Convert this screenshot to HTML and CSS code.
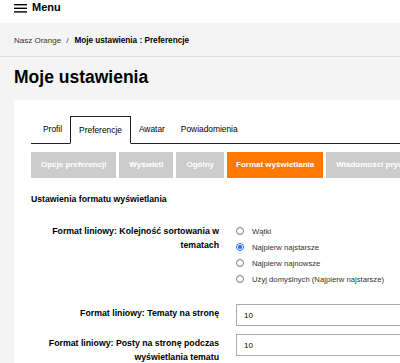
FILE: index.html
```
<!DOCTYPE html>
<html lang="pl">
<head>
<meta charset="utf-8">
<title>Moje ustawienia</title>
<link rel="stylesheet" href="styles.css">
</head>
<body>
<header class="topbar">
  <svg class="menu-icon" width="13" height="10" viewBox="0 0 13 10" aria-hidden="true">
    <rect x="0" y="0" width="13" height="1.4" fill="#000"/>
    <rect x="0" y="3.6" width="13" height="1.4" fill="#000"/>
    <rect x="0" y="7.2" width="13" height="1.4" fill="#000"/>
  </svg>
  <span class="menu-label">Menu</span>
</header>
<nav class="breadcrumb">
  <span class="crumb">Nasz Orange</span>
  <span class="crumb-sep">/</span>
  <span class="crumb-current">Moje ustawienia : Preferencje</span>
</nav>
<main class="page">
  <h1 class="page-title">Moje ustawienia</h1>
  <section class="card">
    <ul class="tabs">
      <li class="tab">Profil</li>
      <li class="tab tab-active">Preferencje</li>
      <li class="tab">Awatar</li>
      <li class="tab">Powiadomienia</li>
    </ul>
    <div class="subtabs">
      <span class="subtab">Opcje preferencji</span>
      <span class="subtab">Wyświetl</span>
      <span class="subtab">Ogólny</span>
      <span class="subtab subtab-active">Format wyświetlania</span>
      <span class="subtab">Wiadomości prywatne</span>
    </div>
    <h2 class="section-title">Ustawienia formatu wyświetlania</h2>
    <div class="form">
      <div class="field field-radio">
        <div class="field-label">Format liniowy: Kolejność sortowania w tematach</div>
        <div class="radios">
          <div class="radio-row"><span class="radio"></span>Wątki</div>
          <div class="radio-row"><span class="radio radio-checked"></span>Najpierw najstarsze</div>
          <div class="radio-row"><span class="radio"></span>Najpierw najnowsze</div>
          <div class="radio-row"><span class="radio"></span>Użyj domyślnych (Najpierw najstarsze)</div>
        </div>
      </div>
      <div class="field">
        <div class="field-label">Format liniowy: Tematy na stronę</div>
        <div><input class="text-input" type="text" value="10"></div>
      </div>
      <div class="field">
        <div class="field-label">Format liniowy: Posty na stronę podczas wyświetlania tematu</div>
        <div><input class="text-input" type="text" value="10"></div>
      </div>
    </div>
  </section>
</main>
</body>
</html>
```
FILE: styles.css
```
html, body {
  margin: 0;
  padding: 0;
  overflow: hidden;
}
body {
  font-family: "Liberation Sans", Arial, sans-serif;
  background: #f4f4f4;
  color: #000;
  width: 400px;
  height: 363px;
}
.topbar {
  height: 23px;
  background: #fff;
  display: flex;
  align-items: flex-start;
  padding-left: 14px;
  box-sizing: border-box;
}
.menu-icon {
  margin-top: 4px;
  margin-right: 5px;
}
.menu-label {
  font-size: 11px;
  font-weight: bold;
  line-height: 13px;
  margin-top: 1px;
}
.breadcrumb {
  height: 34px;
  box-sizing: border-box;
  border-bottom: 1px solid #dcdcdc;
  display: flex;
  align-items: center;
  padding-left: 14px;
  padding-top: 1px;
  font-size: 8px;
  background: #f4f4f4;
}
.crumb {
  color: #333;
}
.crumb-sep {
  color: #333;
  margin: 0 6px 0 5px;
}
.crumb-current {
  font-weight: bold;
  font-size: 8.2px;
}
.page {
  padding: 0 0 0 14px;
}
.page-title {
  font-size: 17.5px;
  line-height: 20px;
  font-weight: bold;
  margin: 10px 0 13px 0;
}
.card {
  background: #fff;
  width: 600px;
  padding: 16px 0 20px 17px;
  box-sizing: border-box;
}
.tabs {
  list-style: none;
  margin: 0;
  padding: 0 0 0 4px;
  display: flex;
  align-items: flex-end;
  border-bottom: 1px solid #222;
}
.tab {
  font-size: 8.4px;
  height: 27px;
  line-height: 27px;
  padding: 0 8px;
}
.tab-active {
  height: 26px;
  line-height: 26px;
  border: 1px solid #222;
  border-bottom: 1px solid #fff;
  margin-bottom: -1px;
  background: #fff;
}
.subtabs {
  display: flex;
  gap: 3px;
  margin-top: 8px;
  white-space: nowrap;
}
.subtab {
  height: 26px;
  line-height: 26px;
  padding: 0 10px;
  background: #cccccc;
  color: #fff;
  font-size: 8px;
  font-weight: bold;
}
.subtab-active {
  background: #ff7900;
  padding: 0 9px;
}
.section-title {
  font-size: 8.7px;
  line-height: 12px;
  font-weight: bold;
  margin: 15px 0 0 0;
}
.form {
  margin-top: 17px;
}
.field {
  display: grid;
  grid-template-columns: 188px 1fr;
  column-gap: 17px;
  margin-bottom: 8px;
}
.field-radio {
  margin-bottom: 17px;
}
.field-label {
  font-size: 8.75px;
  font-weight: bold;
  line-height: 14px;
  padding-top: 2px;
  text-align: right;
}
.radios {
  font-size: 7.7px;
  color: #333;
}
.radio-row {
  display: flex;
  align-items: center;
  height: 16px;
}
.radio-row:first-child {
  margin-top: 1px;
}
.radio {
  width: 8px;
  height: 8px;
  border: 1px solid #777;
  border-radius: 50%;
  box-sizing: border-box;
  margin-right: 8px;
  position: relative;
  flex: none;
}
.radio-checked {
  border-color: #1a6fe0;
}
.radio-checked::after {
  content: "";
  position: absolute;
  left: 1px;
  top: 1px;
  width: 4px;
  height: 4px;
  border-radius: 50%;
  background: #1a6fe0;
}
.text-input {
  display: block;
  width: 300px;
  height: 22px;
  box-sizing: border-box;
  border: 1px solid #aaa;
  padding: 0 7px;
  font-family: "Liberation Sans", Arial, sans-serif;
  font-size: 8px;
  color: #000;
  margin: 0;
}
```
